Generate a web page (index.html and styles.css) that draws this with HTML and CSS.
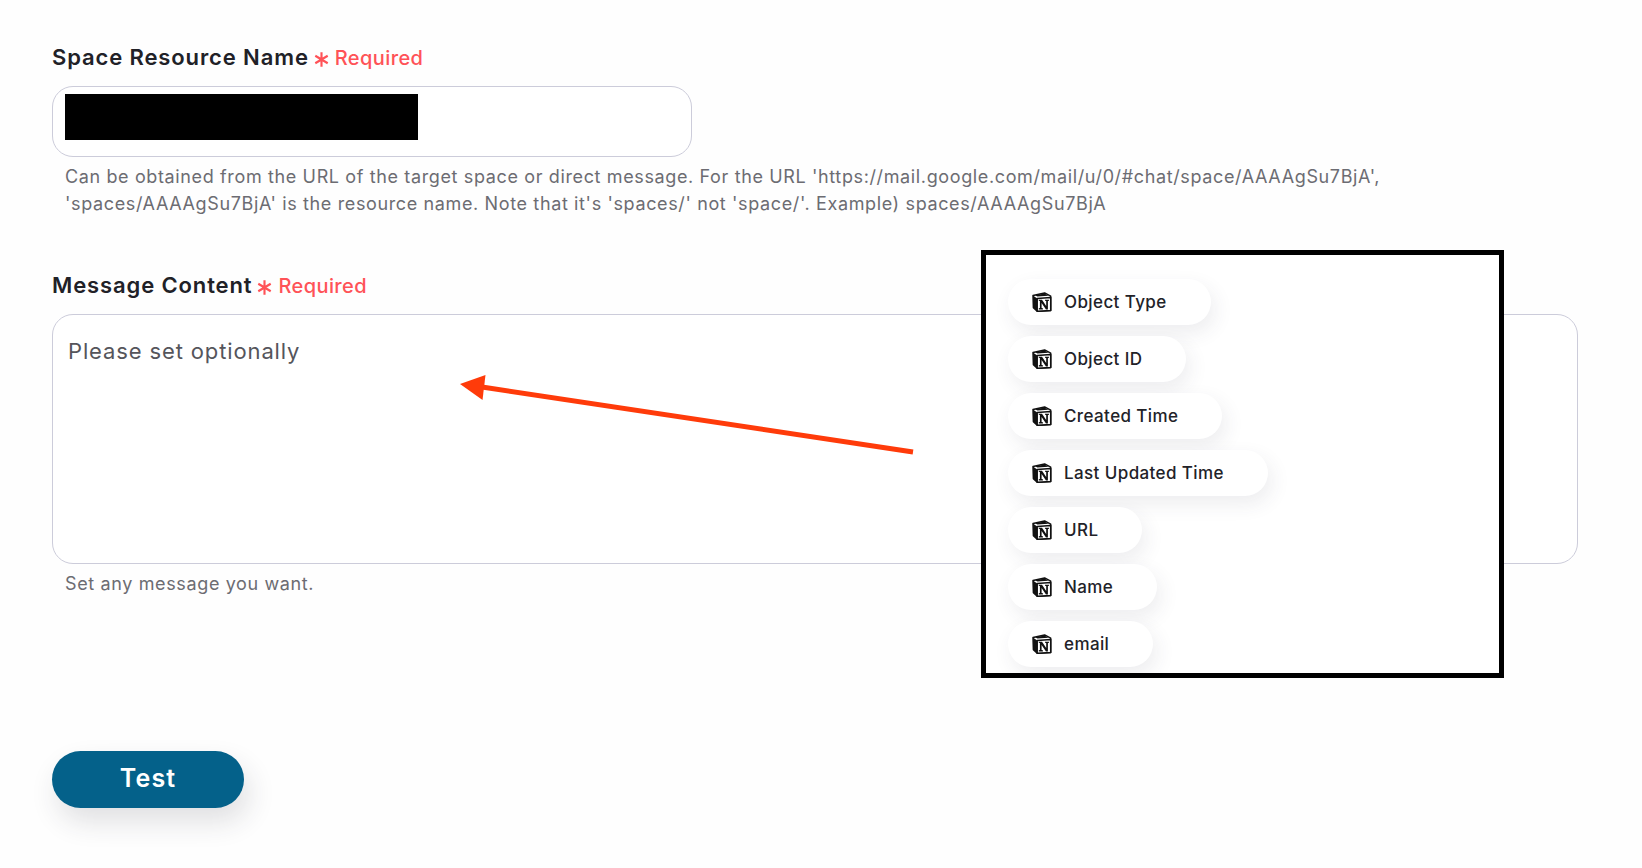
FILE: index.html
```html
<!DOCTYPE html>
<html lang="en">
<head>
<meta charset="utf-8">
<title>Message form</title>
<link rel="stylesheet" href="styles.css">
</head>
<body>
<svg class="defs" width="0" height="0" aria-hidden="true">
  <defs>
    <symbol id="notion" viewBox="0 0 20 20">
      <path d="M1 3.600 12.600.9l6.100 3.300v14.200L5.200 19.300 1.400 15.700z" fill="#fff" stroke="#111" stroke-width="1.500" stroke-linejoin="round"/>
      <path d="M5.200 6.400l13.500-1v13L5.200 19.300z" fill="#fff" stroke="#111" stroke-width="1.500" stroke-linejoin="round"/>
      <path d="M5.200 6.400V19.300L1.400 15.700 1 3.600z" fill="#111"/>
      <path d="M3.200 3.300 12.600 1.500l3.800 2.300-11 .8z" fill="#111"/>
      <path d="M6.800 7.800H10l4.200 6.200V9l-1.200-.2v-1h4v1l-1.100.2v8.600H14L9.600 11v5l1.300.3v1.300H6.800v-1.300l1.100-.3V9l-1.100-.2z" fill="#111"/>
    </symbol>
    <symbol id="star" viewBox="0 0 14 14">
      <path d="M7 .3v13.400M1.200 3.500l11.600 7M12.800 3.500l-11.600 7" fill="none" stroke="#ff5257" stroke-width="2"/>
    </symbol>
  </defs>
</svg>

<main class="page">
  <section class="field">
    <div class="label-row">
      <span class="label">Space Resource Name</span>
      <svg class="star"><use href="#star"/></svg>
      <span class="required">Required</span>
    </div>
    <div class="input"><div class="redaction"></div></div>
    <p class="help">Can be obtained from the URL of the target space or direct message. For the URL 'https://mail.google.com/mail/u/0/#chat/space/AAAAgSu7BjA',<br>'spaces/AAAAgSu7BjA' is the resource name. Note that it's 'spaces/' not 'space/'. Example) spaces/AAAAgSu7BjA</p>
  </section>

  <section class="field field-message">
    <div class="label-row">
      <span class="label">Message Content</span>
      <svg class="star"><use href="#star"/></svg>
      <span class="required">Required</span>
    </div>
    <div class="textarea">Please set optionally</div>
    <p class="help">Set any message you want.</p>
  </section>

  <button class="test" type="button">Test</button>
</main>

<svg class="arrow" width="470" height="90" viewBox="0 0 470 90" aria-hidden="true">
  <path d="M453 82 22 17" stroke="#ff3b0a" stroke-width="5" fill="none"/>
  <path d="M0 14 25.500 5 22.500 30z" fill="#ff3b0a"/>
</svg>

<aside class="popup">
  <div class="pill"><svg class="pill-icon"><use href="#notion"/></svg>Object Type</div>
  <div class="pill"><svg class="pill-icon"><use href="#notion"/></svg>Object ID</div>
  <div class="pill"><svg class="pill-icon"><use href="#notion"/></svg>Created Time</div>
  <div class="pill"><svg class="pill-icon"><use href="#notion"/></svg>Last Updated Time</div>
  <div class="pill"><svg class="pill-icon"><use href="#notion"/></svg>URL</div>
  <div class="pill"><svg class="pill-icon"><use href="#notion"/></svg>Name</div>
  <div class="pill"><svg class="pill-icon"><use href="#notion"/></svg>email</div>
</aside>
</body>
</html>
```

FILE: styles.css
```css
* { box-sizing: border-box; }

html, body {
  margin: 0;
  height: 100%;
  overflow: hidden;
}

body {
  position: relative;
  background: #fefefe;
  font-family: Inter, "Liberation Sans", sans-serif;
  color: #212127;
}

.defs { position: absolute; }

.page {
  display: flex;
  flex-direction: column;
  padding: 43px 64px 0 52px;
}

.field-message { margin-top: 54px; }

.label-row {
  display: flex;
  align-items: center;
  height: 28px;
}

.label {
  font-size: 22px;
  font-weight: 600;
  letter-spacing: 0.88px;
  line-height: 28px;
}

.star {
  width: 15px;
  height: 15px;
  margin: 4px 6px 0 5px;
}

.required {
  position: relative;
  top: 1px;
  font-size: 20px;
  font-weight: 500;
  letter-spacing: 0.4px;
  color: #ff5257;
  line-height: 28px;
}

.input {
  width: 640px;
  height: 71px;
  margin-top: 15px;
  padding: 7px 12px;
  background: #fff;
  border: 1px solid #ccccda;
  border-radius: 21px;
}

.redaction {
  width: 353px;
  height: 46px;
  background: #000;
}

.help {
  margin: 6px 0 0 13px;
  font-size: 18px;
  line-height: 27px;
  letter-spacing: 0.63px;
  color: #6c6c72;
  white-space: nowrap;
}

.textarea {
  height: 250px;
  margin-top: 15px;
  padding: 22px 15px;
  background: #fff;
  border: 1px solid #ccccda;
  border-radius: 21px;
  font-size: 22px;
  line-height: 28px;
  letter-spacing: 0.87px;
  color: #55555b;
}

.test {
  align-self: flex-start;
  width: 192px;
  height: 57px;
  margin-top: 154px;
  padding: 0 0 3px;
  border: 0;
  border-radius: 29px;
  background: #04618a;
  color: #fff;
  font-family: inherit;
  font-size: 25px;
  font-weight: 600;
  letter-spacing: 1.1px;
  box-shadow: 5px 14px 28px rgba(40, 40, 60, 0.14);
}

.arrow {
  position: absolute;
  left: 460px;
  top: 370px;
}

.popup {
  position: absolute;
  left: 981px;
  top: 250px;
  width: 523px;
  height: 428px;
  padding: 24px 0 0 22px;
  display: flex;
  flex-direction: column;
  align-items: flex-start;
  gap: 11px;
  background: #fff;
  border: 5px solid #000;
  overflow: hidden;
}

.pill {
  display: flex;
  align-items: center;
  height: 46px;
  padding: 0 44px 0 24px;
  border-radius: 23px;
  background: #fff;
  box-shadow: 4px 8px 20px rgba(60, 60, 80, 0.09);
  font-size: 17px;
  font-weight: 500;
  letter-spacing: 0.4px;
  color: #222228;
  white-space: nowrap;
}

.pill-icon {
  width: 20px;
  height: 20px;
  margin-right: 12px;
  flex: none;
}
```
